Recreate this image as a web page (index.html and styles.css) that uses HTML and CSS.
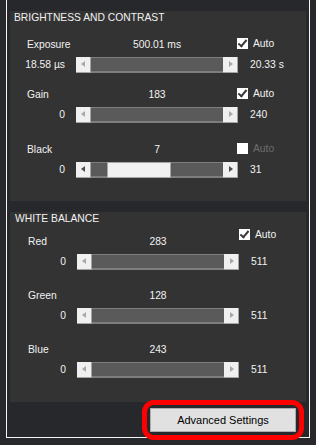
FILE: index.html
```html
<!DOCTYPE html>
<html lang="en">
<head>
    <meta charset="UTF-8">
    <title>Camera Settings</title>
    <link rel="stylesheet" href="styles.css">
</head>
<body>
    <div class="frame">
        <div class="panel">
            <div class="panel-title">BRIGHTNESS AND CONTRAST</div>

            <div class="control first">
                <div class="label">Exposure</div>
                <div class="current">500.01 ms</div>
                <div class="auto"><span class="box checked"></span>Auto</div>
                <div class="min">18.58 µs</div>
                <div class="slider disabled">
                    <span class="arrow left"></span><span class="track"></span><span class="arrow right"></span>
                </div>
                <div class="max">20.33 s</div>
            </div>

            <div class="control gain">
                <div class="label">Gain</div>
                <div class="current">183</div>
                <div class="auto"><span class="box checked"></span>Auto</div>
                <div class="min">0</div>
                <div class="slider disabled">
                    <span class="arrow left"></span><span class="track"></span><span class="arrow right"></span>
                </div>
                <div class="max">240</div>
            </div>

            <div class="control black">
                <div class="label">Black</div>
                <div class="current">7</div>
                <div class="auto off"><span class="box"></span>Auto</div>
                <div class="min">0</div>
                <div class="slider">
                    <span class="arrow left"></span>
                    <span class="track"><span class="thumb" style="margin-left: 16px;"></span></span>
                    <span class="arrow right"></span>
                </div>
                <div class="max">31</div>
            </div>
        </div>

        <div class="panel wb">
            <div class="panel-title">WHITE BALANCE</div>

            <div class="control first">
                <div class="label">Red</div>
                <div class="current">283</div>
                <div class="auto"><span class="box checked"></span>Auto</div>
                <div class="min">0</div>
                <div class="slider disabled">
                    <span class="arrow left"></span><span class="track"></span><span class="arrow right"></span>
                </div>
                <div class="max">511</div>
            </div>

            <div class="control">
                <div class="label">Green</div>
                <div class="current">128</div>
                <div class="min">0</div>
                <div class="slider disabled">
                    <span class="arrow left"></span><span class="track"></span><span class="arrow right"></span>
                </div>
                <div class="max">511</div>
            </div>

            <div class="control">
                <div class="label">Blue</div>
                <div class="current">243</div>
                <div class="min">0</div>
                <div class="slider disabled">
                    <span class="arrow left"></span><span class="track"></span><span class="arrow right"></span>
                </div>
                <div class="max">511</div>
            </div>
        </div>

        <div class="footer">
            <div class="highlight">
                <button class="advanced">Advanced Settings</button>
            </div>
        </div>
    </div>
</body>
</html>
```

FILE: styles.css
```css
* {
    margin: 0;
    padding: 0;
    box-sizing: border-box;
}
body {
    font-family: 'Liberation Sans', Arial, sans-serif;
    font-size: 10.3px;
    background: #26282b;
    color: #f2f2f2;
    height: 445px;
    overflow: hidden;
}
.frame {
    margin-left: 6px;
    width: 304px;
    height: 438px;
    padding: 11px 3px 0 3px;
    border-left: 1px solid #f4f4f4;
    border-right: 1px solid #f4f4f4;
    border-bottom: 1px solid #f4f4f4;
}
.panel {
    background: #333333;
    height: 190px;
}
.panel.wb {
    margin-top: 11px;
}
.panel-title {
    height: 14px;
    line-height: 14px;
    padding-left: 4px;
}
.wb .panel-title {
    padding-left: 5px;
}
.control {
    display: grid;
    grid-template-columns: 66px 162px 1fr;
    grid-template-rows: 14px 16px;
    row-gap: 5px;
    margin-top: 15px;
}
.control.first {
    margin-top: 13px;
}
.control.black {
    margin-top: 20px;
}
.wb .control {
    margin-top: 19px;
    padding-left: 1px;
}
.wb .control.first {
    margin-top: 9px;
}
.label {
    padding-left: 17px;
    line-height: 14px;
}
.current {
    text-align: center;
    line-height: 14px;
}
.auto {
    display: flex;
    align-items: center;
    gap: 5px;
    margin-left: -1px;
    height: 11px;
    line-height: 11px;
    align-self: start;
}
.wb .auto {
    margin-top: -6px;
    margin-left: 0;
}
.auto.off {
    color: #6e6e6e;
}
.box {
    width: 11px;
    height: 11px;
    background: #ffffff;
    position: relative;
}
.box.checked::after {
    content: "";
    position: absolute;
    left: 3px;
    top: 0px;
    width: 3px;
    height: 7px;
    border-right: 2px solid #3a3a3a;
    border-bottom: 2px solid #3a3a3a;
    transform: rotate(40deg);
}
.min {
    grid-row: 2;
    grid-column: 1;
    text-align: right;
    padding-right: 11px;
    line-height: 16px;
}
.max {
    grid-row: 2;
    grid-column: 3;
    padding-left: 12px;
    line-height: 16px;
}
.slider {
    grid-row: 2;
    grid-column: 2;
    display: flex;
    height: 16px;
}
.arrow {
    width: 15px;
    flex: none;
    background: #f0f0f0;
    border-right: 1px solid #a5a5a5;
    border-bottom: 1px solid #a5a5a5;
    position: relative;
}
.arrow::after {
    content: "";
    position: absolute;
    top: 4px;
    border-top: 3.5px solid transparent;
    border-bottom: 3.5px solid transparent;
}
.arrow.left::after {
    left: 5px;
    border-right: 4px solid #4d4d4d;
}
.arrow.right::after {
    left: 6px;
    border-left: 4px solid #4d4d4d;
}
.slider.disabled .arrow.left::after {
    border-right-color: #a8a8a8;
}
.slider.disabled .arrow.right::after {
    border-left-color: #a8a8a8;
}
.track {
    flex: 1;
    display: flex;
    background: #5a5a5a;
    border-top: 1px solid #7e7e7e;
    border-bottom: 2px solid #7e7e7e;
}
.thumb {
    width: 64px;
    background: #f0f0f0;
    border: 1px solid #a5a5a5;
    margin-top: -1px;
    margin-bottom: -2px;
}
.footer {
    display: flex;
    justify-content: flex-end;
    margin-top: -2px;
    padding-right: 2px;
}
.highlight {
    border: 5px solid #ff0000;
    border-radius: 12px;
    padding: 3px;
}
.advanced {
    display: block;
    width: 146px;
    height: 24px;
    background: #e1e1e1;
    border: 1px solid #adadad;
    font-family: 'Liberation Sans', Arial, sans-serif;
    font-size: 11px;
    color: #000;
}
```
